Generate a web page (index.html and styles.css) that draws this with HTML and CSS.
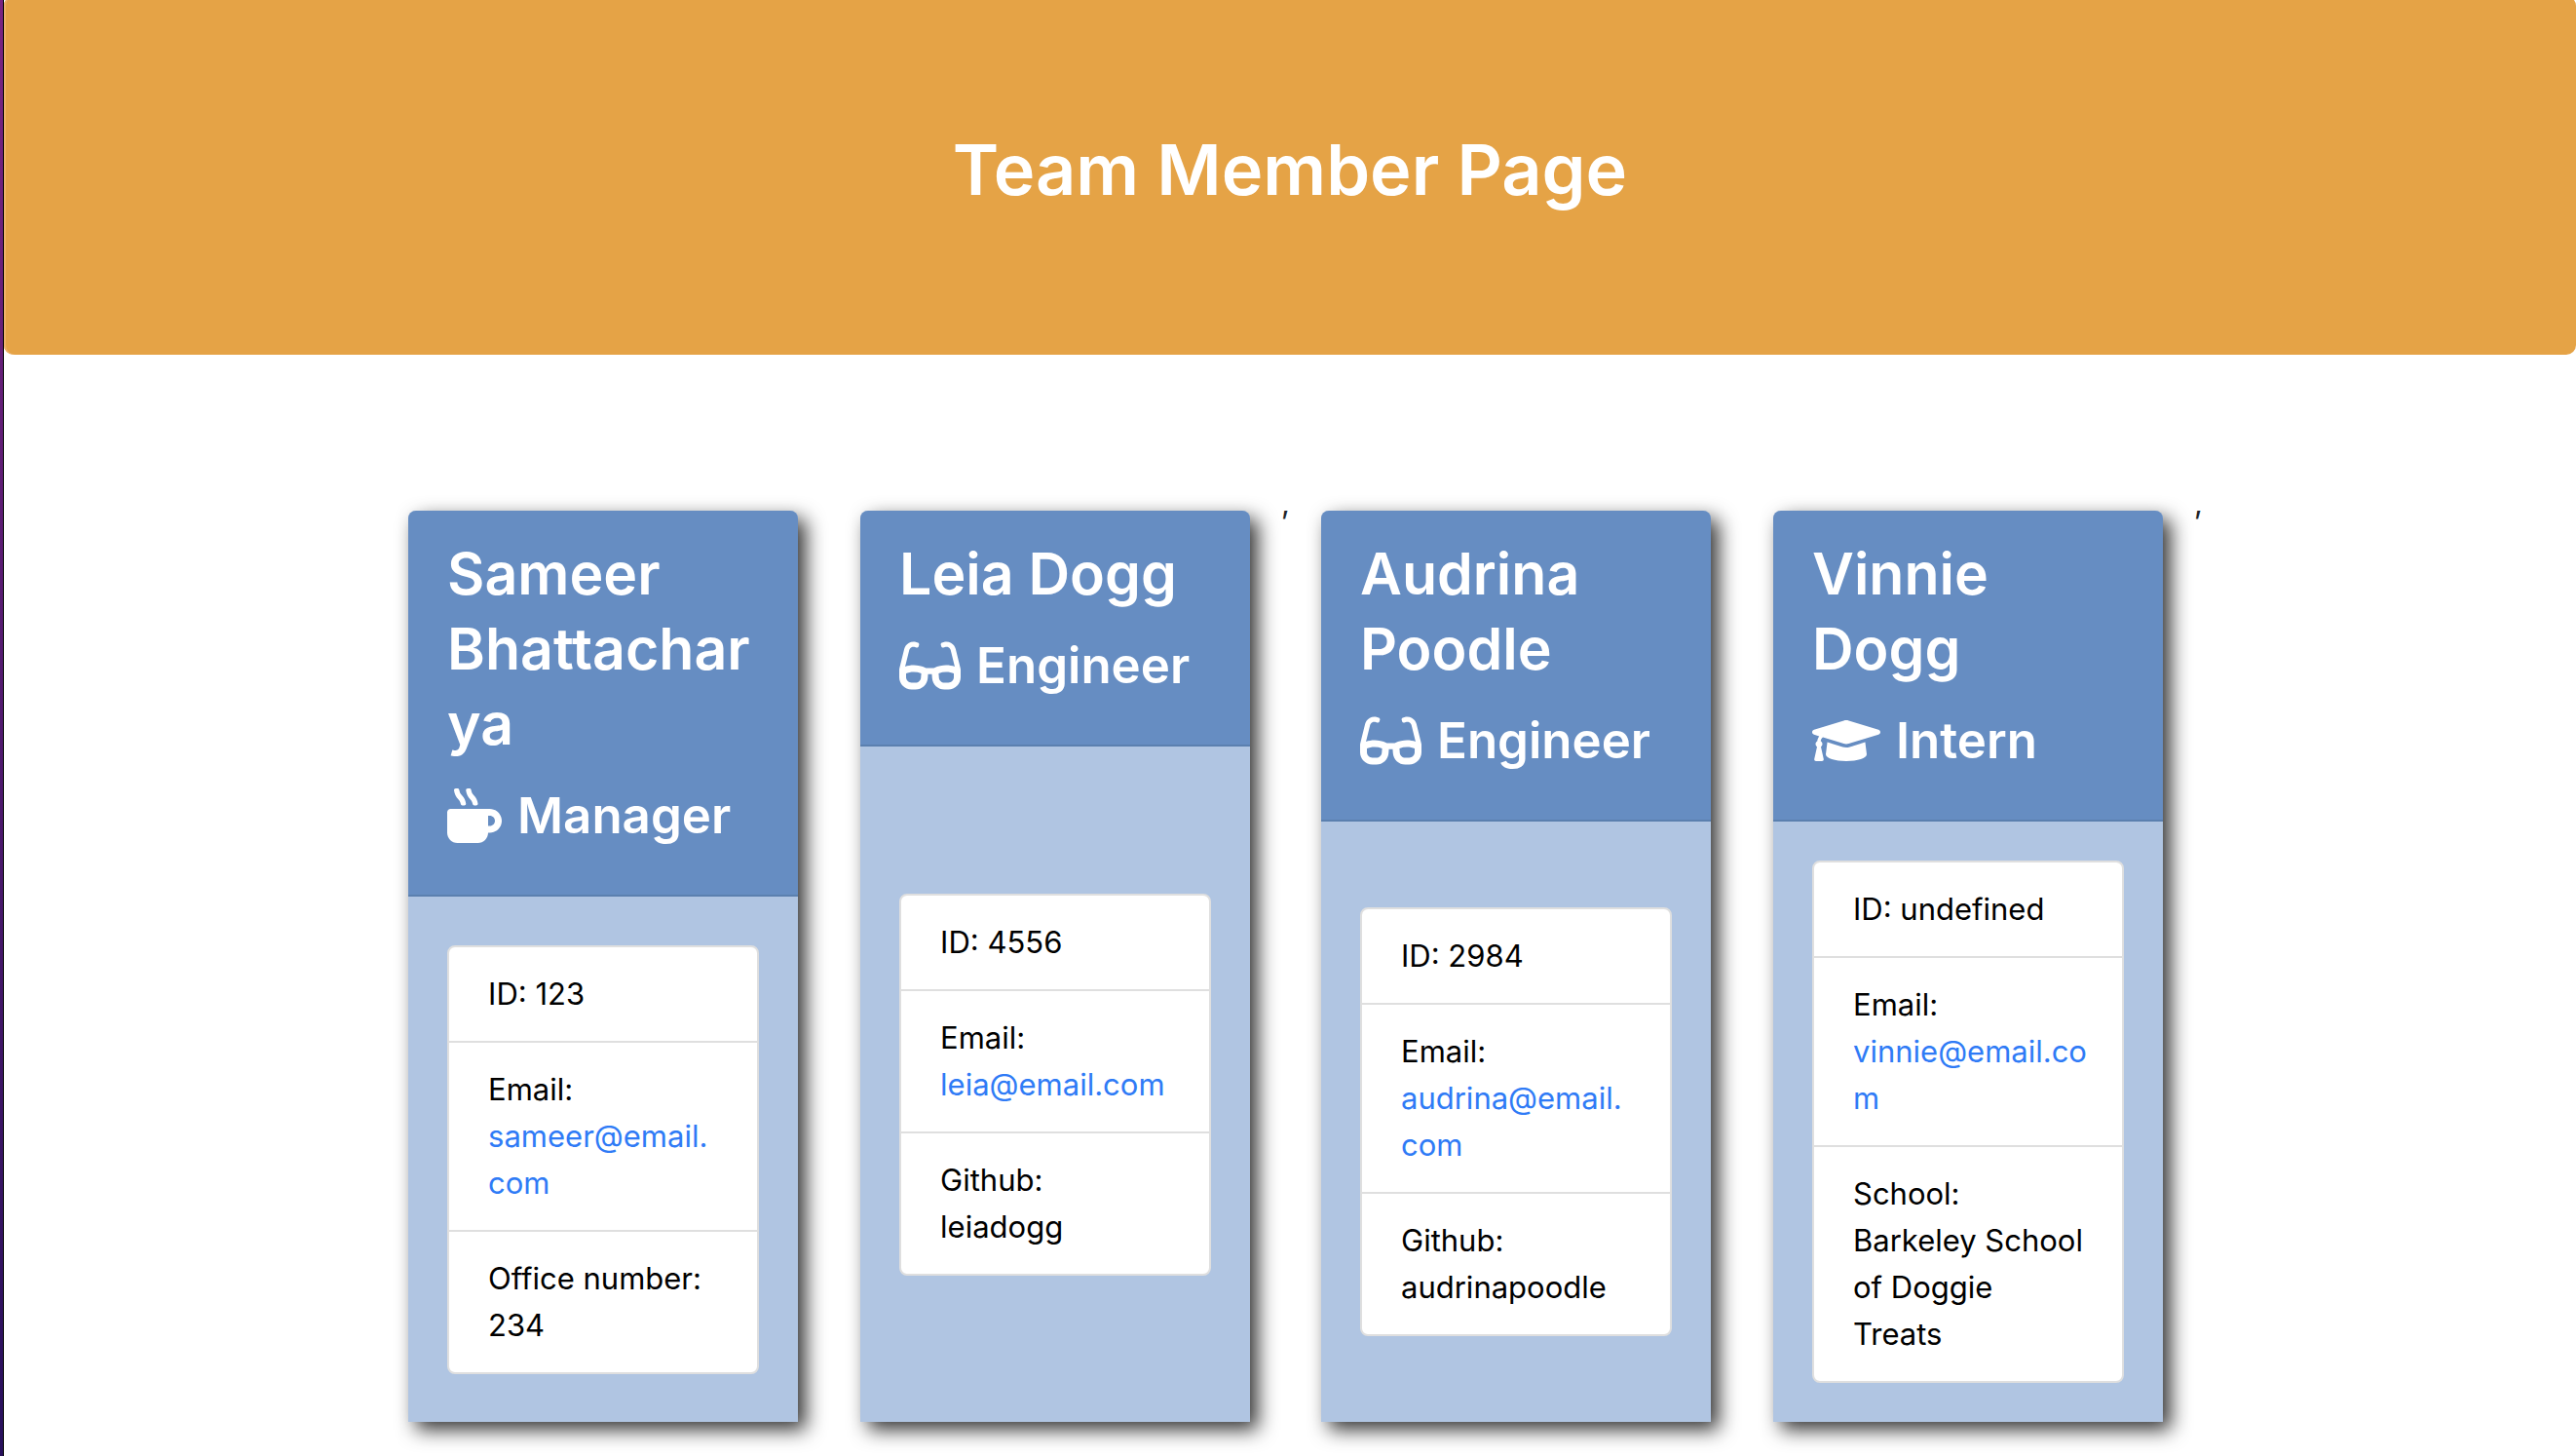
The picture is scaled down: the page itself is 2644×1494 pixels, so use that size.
FILE: index.html
```
<!DOCTYPE html>
<html lang="en">
<head>
<meta charset="utf-8">
<meta name="viewport" content="width=device-width, initial-scale=1">
<title>Team Member Page</title>
<link rel="stylesheet" href="styles.css">
</head>
<body>
<header class="banner">
  <h1 class="banner-title">Team Member Page</h1>
</header>
<main class="team">
  <article class="card">
    <div class="card-header">
      <h2 class="name">Sameer Bhattachar<wbr>ya</h2>
      <h3 class="role">
        <svg class="icon" viewBox="0 0 512 512" aria-hidden="true"><path d="M127.100 146.500c1.300 7.700 8 13.500 16 13.500h16.500c9.800 0 17.600-8.500 16.300-18-3.800-28.200-16.400-54.200-36.600-74.700-14.400-14.700-23.600-33.300-26.400-53.500C111.800 5.900 105 0 96.800 0H80.400C70.600 0 63 8.500 64.100 18c3.900 31.900 18 61.300 40.600 84.400 12 12.200 19.700 27.500 22.400 44.100zm112 0c1.300 7.700 8 13.500 16 13.500h16.500c9.800 0 17.600-8.500 16.300-18-3.800-28.200-16.400-54.200-36.600-74.700-14.400-14.700-23.600-33.300-26.400-53.500C223.800 5.900 217 0 208.800 0h-16.400c-9.800 0-17.500 8.500-16.300 18 3.900 31.900 18 61.300 40.600 84.400 12 12.200 19.700 27.500 22.400 44.100zM400 192H32c-17.700 0-32 14.300-32 32v192c0 53 43 96 96 96h192c53 0 96-43 96-96h16c61.800 0 112-50.200 112-112s-50.200-112-112-112zm0 160h-16v-96h16c26.500 0 48 21.500 48 48s-21.500 48-48 48z"/></svg>
        Manager
      </h3>
    </div>
    <div class="card-body">
      <ul class="details">
        <li>ID: 123</li>
        <li>Email: <br><a href="mailto:sameer@email.com">sameer@email.<wbr>com</a></li>
        <li>Office number: <br>234</li>
      </ul>
    </div>
  </article>
  <article class="card">
    <div class="card-header">
      <h2 class="name">Leia Dogg</h2>
      <h3 class="role">
        <svg class="icon" viewBox="0 0 576 512" aria-hidden="true"><path d="M574.100 280.370L528.750 98.660c-5.910-23.700-21.590-44.050-43-55.810-21.440-11.730-46.970-14.110-70.190-6.330l-15.250 5.080c-8.390 2.790-12.920 11.860-10.120 20.240l5.060 15.180c2.790 8.380 11.850 12.910 20.230 10.120l13.180-4.390c10.870-3.620 23-3.570 33.160 1.730 10.290 5.370 17.570 14.560 20.370 25.820l38.460 153.820c-22.190-6.810-49.790-12.460-81.200-12.460-34.770 0-73.980 7.020-114.850 26.740h-73.180c-40.870-19.740-80.080-26.750-114.860-26.750-31.420 0-59.020 5.650-81.210 12.460l38.460-153.830c2.790-11.250 10.090-20.450 20.380-25.810 10.160-5.300 22.280-5.350 33.150-1.730l13.170 4.390c8.380 2.790 17.440-1.740 20.230-10.120l5.060-15.180c2.800-8.380-1.730-17.450-10.120-20.240l-15.250-5.080c-23.220-7.780-48.750-5.410-70.190 6.330-21.410 11.770-37.090 32.110-43 55.800L1.900 280.370A64.218 64.218 0 0 0 0 295.860v70.250C0 429.010 51.580 480 115.200 480h37.120c60.280 0 110.370-45.940 114.880-105.370l2.930-38.630h35.750l2.930 38.630C313.310 434.060 363.400 480 423.680 480h37.120c63.620 0 115.200-50.990 115.200-113.880v-70.250c0-5.230-.64-10.430-1.900-15.500zm-370.720 89.420c-1.970 25.910-24.400 46.210-51.060 46.210H115.200C86.970 416 64 393.620 64 366.110v-37.540c18.120-6.490 43.420-12.920 72.580-12.920 23.860 0 47.260 4.330 69.930 12.920l-3.130 41.220zM512 366.120c0 27.510-22.970 49.880-51.200 49.880h-37.120c-26.670 0-49.100-20.300-51.060-46.210l-3.130-41.220c22.670-8.590 46.080-12.920 69.950-12.920 29.120 0 54.430 6.440 72.550 12.930v37.540z"/></svg>
        Engineer
      </h3>
    </div>
    <div class="card-body">
      <ul class="details">
        <li>ID: 4556</li>
        <li>Email: <br><a href="mailto:leia@email.com">leia@email.com</a></li>
        <li>Github: <br>leiadogg</li>
      </ul>
    </div>
  </article>
  <span class="separator">,</span>
  <article class="card">
    <div class="card-header">
      <h2 class="name">Audrina Poodle</h2>
      <h3 class="role">
        <svg class="icon" viewBox="0 0 576 512" aria-hidden="true"><path d="M574.100 280.370L528.750 98.660c-5.910-23.700-21.590-44.050-43-55.810-21.440-11.730-46.970-14.110-70.190-6.330l-15.250 5.080c-8.390 2.790-12.920 11.860-10.120 20.240l5.060 15.180c2.790 8.380 11.850 12.910 20.230 10.120l13.180-4.390c10.870-3.620 23-3.570 33.160 1.730 10.290 5.370 17.570 14.560 20.370 25.820l38.460 153.820c-22.190-6.810-49.790-12.460-81.200-12.460-34.770 0-73.980 7.020-114.850 26.740h-73.180c-40.870-19.740-80.080-26.750-114.860-26.750-31.420 0-59.020 5.650-81.210 12.460l38.460-153.830c2.790-11.250 10.090-20.450 20.380-25.810 10.160-5.300 22.280-5.350 33.150-1.730l13.170 4.390c8.380 2.790 17.440-1.740 20.230-10.120l5.060-15.180c2.800-8.380-1.730-17.450-10.120-20.240l-15.250-5.080c-23.220-7.780-48.750-5.410-70.190 6.330-21.410 11.770-37.090 32.110-43 55.800L1.900 280.370A64.218 64.218 0 0 0 0 295.860v70.250C0 429.010 51.580 480 115.200 480h37.120c60.280 0 110.370-45.940 114.880-105.370l2.930-38.630h35.750l2.930 38.630C313.310 434.060 363.400 480 423.680 480h37.120c63.620 0 115.200-50.990 115.200-113.880v-70.250c0-5.230-.64-10.430-1.900-15.500zm-370.720 89.420c-1.970 25.910-24.400 46.210-51.060 46.210H115.200C86.970 416 64 393.620 64 366.110v-37.540c18.120-6.490 43.420-12.920 72.580-12.920 23.860 0 47.260 4.330 69.930 12.920l-3.130 41.220zM512 366.120c0 27.510-22.970 49.880-51.200 49.880h-37.120c-26.670 0-49.100-20.300-51.060-46.210l-3.130-41.220c22.670-8.590 46.080-12.920 69.950-12.920 29.120 0 54.430 6.440 72.550 12.930v37.540z"/></svg>
        Engineer
      </h3>
    </div>
    <div class="card-body">
      <ul class="details">
        <li>ID: 2984</li>
        <li>Email: <br><a href="mailto:audrina@email.com">audrina@email.<wbr>com</a></li>
        <li>Github: <br>audrinapoodle</li>
      </ul>
    </div>
  </article>
  <article class="card">
    <div class="card-header">
      <h2 class="name">Vinnie <br>Dogg</h2>
      <h3 class="role">
        <svg class="icon" viewBox="0 0 640 512" aria-hidden="true"><path d="M622.340 153.200L343.400 67.500c-15.200-4.670-31.600-4.670-46.790 0L17.660 153.200c-23.540 7.230-23.540 38.360 0 45.590l48.630 14.940c-10.670 13.190-17.230 29.280-17.880 46.900C38.780 266.150 32 276.110 32 288c0 10.780 5.680 19.850 13.860 25.650L20.330 428.530C18.110 438.520 25.710 448 35.940 448h56.110c10.240 0 17.840-9.480 15.620-19.470L82.140 313.650C90.320 307.850 96 298.780 96 288c0-11.570-6.470-21.250-15.660-26.870.76-15.020 8.440-28.300 20.690-36.720L296.600 284.500c9.060 2.780 26.440 6.250 46.790 0l278.950-85.700c23.550-7.240 23.550-38.360 0-45.600zM352.790 315.090c-28.530 8.760-52.840 3.920-65.590 0l-145.020-44.550L128 384c0 35.350 85.960 64 192 64s192-28.650 192-64l-14.180-113.470-145.030 44.560z"/></svg>
        Intern
      </h3>
    </div>
    <div class="card-body">
      <ul class="details">
        <li>ID: undefined</li>
        <li>Email: <br><a href="mailto:vinnie@email.com">vinnie@email.co<wbr>m</a></li>
        <li>School: <br>Barkeley School of Doggie <br>Treats</li>
      </ul>
    </div>
  </article>
  <span class="separator">,</span>
</main>
</body>
</html>
```
FILE: styles.css
```
*, *::before, *::after { box-sizing: border-box; }

html {
  background:
    linear-gradient(#000, #000) 3px 0 / 1px 100% no-repeat,
    linear-gradient(#7a2482, #28105c) 0 0 / 3px 100% no-repeat,
    #fff;
  min-height: 100%;
}

body {
  margin: 0;
  padding-left: 4px;
  font-family: Inter, "Liberation Sans", sans-serif;
  font-size: 31px;
  line-height: 48px;
  color: #212529;
}

h1, h2, h3, ul { margin: 0; padding: 0; font-weight: 600; }

.banner {
  margin-top: -4px;
  margin-bottom: 128px;
  padding: 130px 64px 142px;
  border-radius: 10px;
  background: #e5a346;
  box-shadow: inset 2px 0 #edb169;
  color: #fff;
  text-align: center;
}

.banner-title { font-size: 72px; line-height: 96px; }

.team {
  display: flex;
  justify-content: center;
}

.card {
  display: flex;
  flex-direction: column;
  flex: 0 0 400px;
  margin: 32px;
  border-radius: 8px 8px 0 0;
  background: #b0c5e2;
  box-shadow: 8px 8px 20px rgba(0, 0, 0, .8);
}

.card-header {
  padding: 26px 40px 40px;
  border-bottom: 2px solid #5b80af;
  border-radius: 8px 8px 0 0;
  background: #668dc2;
  color: #fff;
}

.name {
  margin-bottom: 14px;
  font-size: 59px;
  line-height: 77px;
}

.role {
  display: flex;
  align-items: center;
  gap: 16px;
  font-size: 51px;
  line-height: 83px;
}

.icon {
  height: 56px;
  flex: none;
  fill: currentColor;
}

.card-body {
  display: flex;
  flex: 1;
  flex-direction: column;
  justify-content: center;
  padding: 40px;
}

.details {
  border: 2px solid #dfdfdf;
  border-radius: 8px;
  background: #fff;
  color: #000;
  font-weight: 400;
  list-style: none;
}

.details li { padding: 24px 32px 24px 40px; }
.details li + li { border-top: 2px solid #dfdfdf; }

.details a { color: #2f7bf6; text-decoration: none; }
```
